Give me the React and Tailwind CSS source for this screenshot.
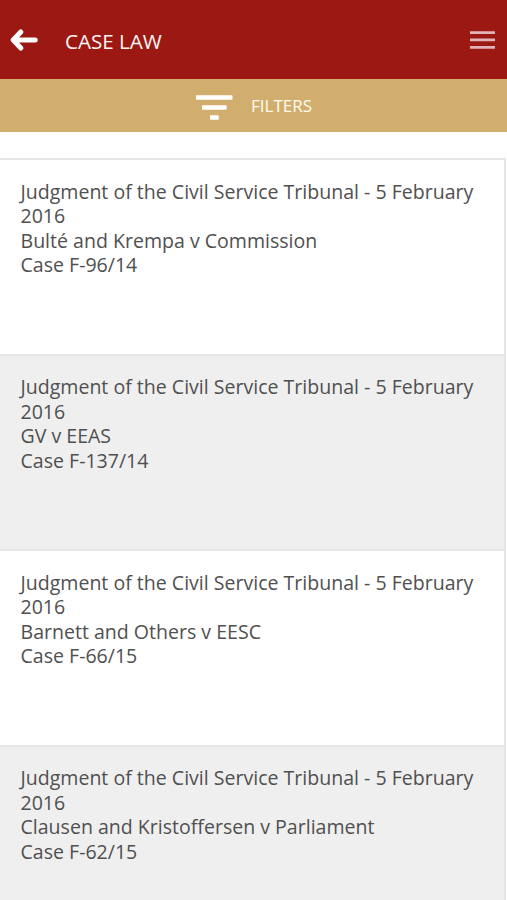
const cases = [
  { parties: 'Bulté and Krempa v Commission', number: 'Case F-96/14' },
  { parties: 'GV v EEAS', number: 'Case F-137/14' },
  { parties: 'Barnett and Others v EESC', number: 'Case F-66/15' },
  { parties: 'Clausen and Kristoffersen v Parliament', number: 'Case F-62/15' },
];

function CaseItem({ item, shaded }) {
  return (
    <li
      className={`h-[195.5px] shrink-0 border-t-2 border-r-2 border-[#e6e6e6] pl-[20.5px] pr-6 pt-[19.5px] text-[19.56px] leading-[24.5px] text-[#505050] ${shaded ? 'bg-[#efefef]' : 'bg-white'}`}
    >
      <p>Judgment of the Civil Service Tribunal - 5 February 2016</p>
      <p>{item.parties}</p>
      <p>{item.number}</p>
    </li>
  );
}

export default function App() {
  return (
    <div className="flex h-[900px] w-[507px] flex-col overflow-hidden bg-white font-['Open_Sans',sans-serif]">
      <header className="flex h-[79px] shrink-0 items-center bg-[#9c1913] pl-[10px] pr-3 pt-px text-[#fff5f3]">
        <svg className="h-7 w-7 text-white" viewBox="0 0 28 28" fill="none" stroke="currentColor" strokeWidth="5" strokeLinecap="round" strokeLinejoin="round">
          <path d="M25.2 14H4M10.8 6L3.2 14L10.8 22" />
        </svg>
        <h1 className="ml-[27px] pt-[2px] text-[20.6px]">CASE LAW</h1>
        <svg className="ml-auto h-[18px] w-[25px]" viewBox="0 0 25 18" fill="#dfb3b8">
          <path d="M0 .2h25v2.7H0zM0 7.6h25v2.7H0zM0 15h25v2.7H0z" />
        </svg>
      </header>
      <button className="flex h-[53px] shrink-0 items-center bg-[#d1ae6d] pl-[196px] text-[#fffaf0]">
        <svg className="mt-[3px] h-[25px] w-[37px] text-white" viewBox="0 0 37 25" fill="currentColor">
          <rect y=".2" width="36.5" height="4.5" rx=".7" />
          <rect x="6" y="10.2" width="24.7" height="4.5" rx=".7" />
          <rect x="14" y="20.2" width="8.8" height="4.5" rx=".7" />
        </svg>
        <span className="ml-[18px] text-[17px]">FILTERS</span>
      </button>
      <ul className="mt-[26px] flex w-[506px] flex-col">
        {cases.map((item, i) => (
          <CaseItem key={item.number} item={item} shaded={i % 2 === 1} />
        ))}
      </ul>
    </div>
  );
}
